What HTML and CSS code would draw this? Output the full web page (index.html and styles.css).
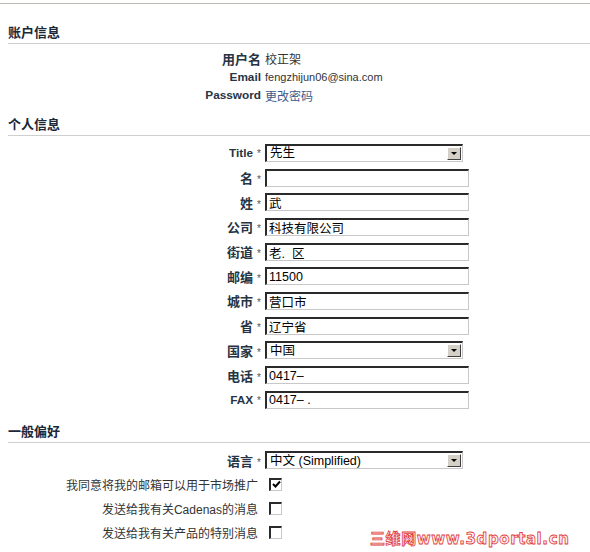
FILE: index.html
```html
<!DOCTYPE html>
<html lang="zh">
<head>
  <meta charset="UTF-8">
  <title>我的账户</title>
  <link rel="stylesheet" href="styles.css">
</head>
<body>
<div class="page">
  <div class="top-rule"></div>

  <div class="section section-first">
    <h2 class="section-title">账户信息</h2>
    <div class="info-grid">
      <div class="label">用户名</div>
      <div class="value">校正架</div>
      <div class="label latin">Email</div>
      <div class="value small">fengzhijun06@sina.com</div>
      <div class="label latin">Password</div>
      <div class="value"><a href="#" class="link">更改密码</a></div>
    </div>
  </div>

  <div class="section">
    <h2 class="section-title">个人信息</h2>
    <div class="form-grid">
      <div class="label"><span class="latin">Title</span><span class="req">*</span></div>
      <div class="field">
        <div class="select"><span class="select-text">先生</span><span class="select-btn"></span></div>
      </div>

      <div class="label">名<span class="req">*</span></div>
      <div class="field"><input type="text" class="text-input" value=""></div>

      <div class="label">姓<span class="req">*</span></div>
      <div class="field"><input type="text" class="text-input" value="武"></div>

      <div class="label">公司<span class="req">*</span></div>
      <div class="field"><input type="text" class="text-input" value="科技有限公司"></div>

      <div class="label">街道<span class="req">*</span></div>
      <div class="field"><input type="text" class="text-input" value="老.  区"></div>

      <div class="label">邮编<span class="req">*</span></div>
      <div class="field"><input type="text" class="text-input" value="11500"></div>

      <div class="label">城市<span class="req">*</span></div>
      <div class="field"><input type="text" class="text-input" value="营口市"></div>

      <div class="label">省<span class="req">*</span></div>
      <div class="field"><input type="text" class="text-input" value="辽宁省"></div>

      <div class="label">国家<span class="req">*</span></div>
      <div class="field">
        <div class="select"><span class="select-text">中国</span><span class="select-btn"></span></div>
      </div>

      <div class="label">电话<span class="req">*</span></div>
      <div class="field"><input type="text" class="text-input" value="0417–"></div>

      <div class="label"><span class="latin">FAX</span><span class="req">*</span></div>
      <div class="field"><input type="text" class="text-input" value="0417– ."></div>
    </div>
  </div>

  <div class="section">
    <h2 class="section-title">一般偏好</h2>
    <div class="pref-grid">
      <div class="label">语言<span class="req">*</span></div>
      <div class="field">
        <div class="select"><span class="select-text">中文 (Simplified)</span><span class="select-btn"></span></div>
      </div>

      <div class="label plain">我同意将我的邮箱可以用于市场推广</div>
      <div class="field"><span class="check checked">
        <svg width="9" height="9" viewBox="0 0 9 9"><path d="M1 4 L3.5 6.5 L8 1.5" fill="none" stroke="#000" stroke-width="2"/></svg>
      </span></div>

      <div class="label plain">发送给我有关Cadenas的消息</div>
      <div class="field"><span class="check"></span></div>

      <div class="label plain">发送给我有关产品的特别消息</div>
      <div class="field"><span class="check"></span></div>
    </div>
  </div>

  <div class="watermark">三维网www.3dportal.cn</div>
</div>
</body>
</html>
```

FILE: styles.css
```css
body {
  margin: 0;
  padding: 0;
  background: #fff;
  color: #333;
  font-family: "Liberation Sans", "Noto Sans CJK SC", sans-serif;
  font-size: 12px;
}

.page {
  width: 590px;
  height: 552px;
  padding-top: 3px;
  position: relative;
  overflow: hidden;
  box-sizing: border-box;
}

.top-rule {
  border-top: 1px solid #bdbbb5;
}

.section {
  margin-left: 8px;
}

.section-title {
  margin: 12px 0 0;
  padding-bottom: 2px;
  border-bottom: 1px solid #cfcfcf;
  font-size: 13px;
  line-height: 16px;
  font-weight: bold;
  color: #1b2838;
}

.section-first .section-title {
  margin-top: 21px;
}

/* label / value tables */
.info-grid,
.form-grid,
.pref-grid {
  display: grid;
  grid-template-columns: 253px 1fr;
  column-gap: 4px;
  align-items: center;
}

.info-grid {
  margin-top: 5px;
  grid-auto-rows: 18.5px;
}

.form-grid {
  margin-top: 5px;
  grid-auto-rows: 24.7px;
}

.pref-grid {
  margin-top: 5px;
  grid-auto-rows: 24px;
}

.label {
  text-align: right;
  font-size: 13px;
  font-weight: bold;
  color: #263444;
  white-space: nowrap;
}

.label.latin,
.label .latin {
  font-size: 11.8px;
}

.label.plain {
  font-weight: normal;
  font-size: 12px;
  color: #333;
  padding-right: 3px;
}

.req {
  font-size: 10px;
  font-weight: normal;
  color: #555;
  margin-left: 4px;
}

.value {
  font-size: 12px;
  color: #333;
}

.value.small {
  font-size: 11px;
}

.link {
  color: #3a5b8c;
  text-decoration: none;
}

/* win-classic inputs */
.field {
  display: flex;
  align-items: center;
}

.text-input {
  width: 204px;
  height: 18px;
  box-sizing: border-box;
  margin: 0;
  padding: 0 2px;
  border-style: solid;
  border-width: 2px 1px 1px 2px;
  border-color: #2a2a2a #c8c8c8 #c8c8c8 #2a2a2a;
  background: #fff;
  font-family: "Liberation Sans", "Noto Sans CJK SC", sans-serif;
  font-size: 12.5px;
  color: #000;
  outline: none;
}

.select {
  width: 198px;
  height: 18px;
  box-sizing: border-box;
  border-style: solid;
  border-width: 2px 1px 1px 2px;
  border-color: #2a2a2a #c8c8c8 #c8c8c8 #2a2a2a;
  background: #fff;
  display: flex;
  align-items: center;
  justify-content: space-between;
  color: #000;
  font-size: 12.5px;
}

.select-text {
  padding-left: 3px;
  line-height: 14px;
}

.select-btn {
  width: 14px;
  height: 13px;
  box-sizing: border-box;
  margin-right: 1px;
  background: #d4d0c8;
  border-style: solid;
  border-width: 1px;
  border-color: #fff #404040 #404040 #fff;
  position: relative;
}

.select-btn::after {
  content: "";
  position: absolute;
  left: 3px;
  top: 4px;
  border-left: 3px solid transparent;
  border-right: 3px solid transparent;
  border-top: 3px solid #000;
}

.check {
  width: 13px;
  height: 13px;
  box-sizing: border-box;
  margin-left: 4px;
  border-style: solid;
  border-width: 2px 1px 1px 2px;
  border-color: #2a2a2a #c8c8c8 #c8c8c8 #2a2a2a;
  background: #fff;
  display: flex;
  align-items: center;
  justify-content: center;
}

.watermark {
  position: absolute;
  left: 370px;
  top: 530px;
  font-family: "DejaVu Sans", "Noto Sans CJK SC", sans-serif;
  font-size: 15px;
  font-weight: bold;
  line-height: 18px;
  color: #fff2f2;
  -webkit-text-stroke: 0.8px #e03a3a;
  letter-spacing: 0.6px;
}
```
